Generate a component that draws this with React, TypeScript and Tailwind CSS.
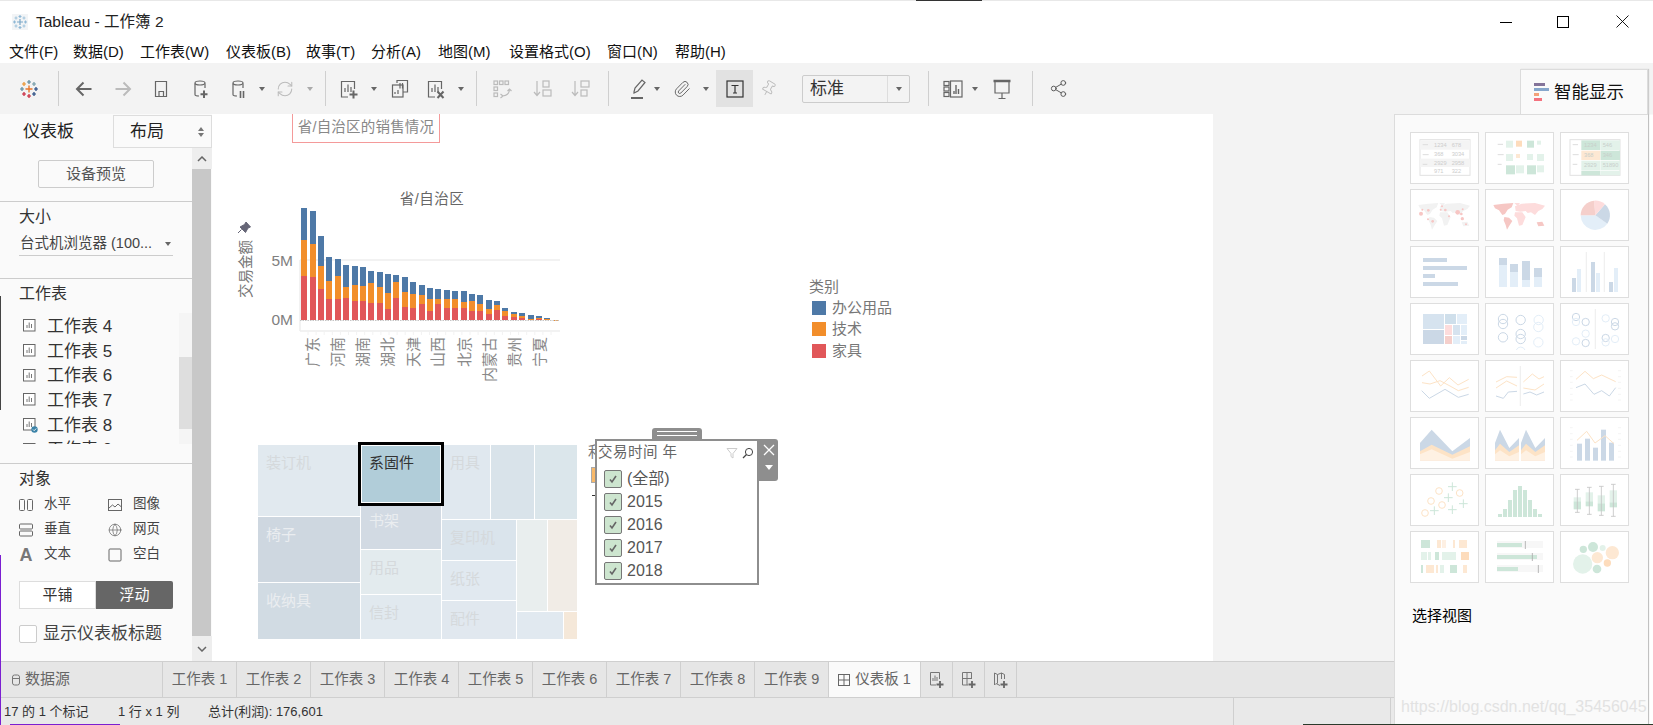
import React from "react";
import { Paperclip, Pin, Share2, RefreshCw, Globe } from "lucide-react";

const Caret = ({ c = "#666" }: { c?: string }) => (
  <svg width="8" height="6" viewBox="0 0 8 6" className="block shrink-0"><path d="M1 1h6L4 5z" fill={c} /></svg>
);
const Sep = ({ cls }: { cls: string }) => <div className={`w-px h-[35px] bg-[#cfcfcf] shrink-0 ${cls}`} />;
const Ico = ({ children, cls }: { children: React.ReactNode; cls: string }) => (
  <svg width="20" height="22" viewBox="0 0 20 22" fill="none" stroke="#666" strokeWidth="1.2" className={`block shrink-0 ${cls}`}>{children}</svg>
);

const Plus = ({ x, y, s = 3, c, w = 1.2 }: { x: number; y: number; s?: number; c: string; w?: number }) => (
  <path d={`M${x - s} ${y}h${s * 2}M${x} ${y - s}v${s * 2}`} stroke={c} strokeWidth={w} fill="none" />
);

const Logo = () => (
  <svg width="20" height="22" viewBox="0 0 20 22" className="block shrink-0 ml-[19px]">
    <Plus x={10} y={11} s={3.5} c="#e8762b" w={1.4} />
    <Plus x={10} y={4} s={2} c="#5b879b" />
    <Plus x={10} y={18} s={2} c="#c72035" />
    <Plus x={3} y={11} s={2} c="#59879b" />
    <Plus x={17} y={11} s={2} c="#1f447e" />
    <Plus x={5} y={6} s={2} c="#eb912b" />
    <Plus x={15} y={6} s={2} c="#7099a6" />
    <Plus x={5} y={16} s={2} c="#c72037" />
    <Plus x={15} y={16} s={2} c="#1f457e" />
  </svg>
);

const SheetIcon = ({ badge }: { badge?: boolean }) => (
  <svg width="16" height="16" viewBox="0 0 16 16" fill="none" className="block shrink-0">
    <rect x="1.5" y="1.5" width="11.5" height="11.5" stroke="#666" strokeWidth="1" fill="#fff" />
    <path d="M5 10V7M7.2 10V4.5M9.5 10V6" stroke="#777" strokeWidth="1" />
    {badge && <circle cx="12.5" cy="12.5" r="3.2" fill="#3b83a8" />}
    {badge && <path d="M11 12.5l1.2 1.2 2-2.2" stroke="#fff" strokeWidth="0.9" />}
  </svg>
);

const Thumb = ({ children }: { children?: React.ReactNode }) => (
  <div className="w-[69px] h-[52px] bg-white outline outline-1 -outline-offset-1 outline-[#dedede]">
    <svg viewBox="0 0 207 156" width="69" height="52" className="block">{children}</svg>
  </div>
);

const G1 = "#cde6d9", G2 = "#e3f2ea", O1 = "#fddcbc", O2 = "#fde8d3", B1 = "#cbd8e6", B2 = "#e3eef8", R1 = "#f5cfcb", R2 = "#fddcdc";

const World = ({ a, b }: { a: string; b: string }) => (
  <g>
    <polygon fill={a} points="25,48 55,44 85,42 80,55 68,62 60,75 52,78 42,64 30,58" />
    <polygon fill={b} points="88,42 105,42 98,52" />
    <polygon fill={a} points="58,84 72,86 82,96 72,112 66,122 62,108 56,94" />
    <polygon fill={b} points="90,52 110,44 150,42 180,50 172,60 160,66 150,78 138,70 128,72 122,66 106,68 92,66" />
    <polygon fill={b} points="90,70 112,70 122,84 112,108 102,110 96,88 88,80" />
    <polygon fill={a} points="155,100 172,98 178,110 160,112" />
  </g>
);

const ThumbLine = ({ p, c }: { p: string; c: string }) => <polyline points={p} fill="none" stroke={c} strokeWidth="3" />;

const Ticks = () => (
  <g stroke="#eee" strokeWidth="2">
    {[32, 50, 67, 85, 103, 120].map((y) => (
      <path key={y} d={`M30 ${y}h8M174 ${y}h9`} />
    ))}
  </g>
);

const Thumbs = () => (
  <div className="grid grid-cols-[repeat(3,69px)] gap-x-[6px] gap-y-[5px] ml-[15px] mt-[17px]">
    <Thumb>
      <rect x="30" y="23" width="150" height="107" fill="#fff" stroke="#e2e2e2" strokeWidth="3" />
      <rect x="30" y="25" width="150" height="28" fill="#f4f4f4" /><rect x="30" y="80" width="150" height="25" fill="#f4f4f4" />
      <path d="M38 38h16M38 68h18M38 97h14" stroke="#ddd" strokeWidth="3" />
      <g fontSize="17" fill="#ccc"><text x="72" y="45">1234</text><text x="125" y="45">678</text><text x="72" y="72">368</text><text x="125" y="72">3034</text><text x="72" y="98">2929</text><text x="125" y="98">2958</text><text x="72" y="124">971</text><text x="125" y="124">322</text></g>
    </Thumb>
    <Thumb>
      <path d="M38 37h16M38 68h18M38 97h12" stroke="#ddd" strokeWidth="3" />
      <rect x="63" y="26" width="21" height="21" fill={G2} /><rect x="93" y="26" width="18" height="18" fill={O1} /><rect x="126" y="26" width="21" height="21" fill={G1} /><rect x="156" y="26" width="12" height="12" fill={G2} />
      <rect x="63" y="66" width="21" height="21" fill={G2} /><rect x="93" y="66" width="12" height="12" fill={O2} /><rect x="126" y="66" width="18" height="18" fill={G2} /><rect x="156" y="66" width="21" height="21" fill={G2} />
      <rect x="63" y="100" width="27" height="27" fill={G1} /><rect x="93" y="100" width="24" height="24" fill={G2} /><rect x="126" y="100" width="27" height="27" fill={G1} /><rect x="156" y="100" width="21" height="21" fill={G2} />
    </Thumb>
    <Thumb>
      <rect x="30" y="23" width="150" height="107" fill="#fff" stroke="#e2e2e2" strokeWidth="3" />
      <path d="M38 38h16M38 68h18M38 97h14" stroke="#ddd" strokeWidth="3" />
      <rect x="64" y="25" width="57" height="29" fill={G1} /><rect x="122" y="25" width="58" height="29" fill={G2} />
      <rect x="64" y="56" width="57" height="28" fill={O2} /><rect x="122" y="56" width="58" height="28" fill={G1} />
      <rect x="64" y="86" width="57" height="28" fill={G2} /><rect x="122" y="86" width="58" height="28" fill={G2} />
      <rect x="64" y="116" width="57" height="14" fill={G1} /><rect x="122" y="116" width="58" height="14" fill={G2} />
      <g fontSize="17" fill="#c8cfca"><text x="72" y="45">1234</text><text x="128" y="45">546</text><text x="72" y="75">368</text><text x="128" y="75">346</text><text x="72" y="105">2929</text><text x="128" y="105">51890</text></g>
    </Thumb>

    <Thumb>
      <World a="#f2f2f2" b="#f2f2f2" />
      <g fill="#f7c6c4">
        <circle cx="33" cy="74" r="6" /><circle cx="37" cy="62" r="3" /><circle cx="55" cy="64" r="4" /><circle cx="92" cy="62" r="3" /><circle cx="96" cy="52" r="3" /><circle cx="106" cy="63" r="4" /><circle cx="143" cy="70" r="7" /><circle cx="157" cy="89" r="5" /><circle cx="154" cy="75" r="4" /><circle cx="54" cy="91" r="3" /><circle cx="68" cy="97" r="4" /><circle cx="117" cy="82" r="3" /><circle cx="168" cy="106" r="3" /><circle cx="158" cy="61" r="3" />
      </g>
    </Thumb>
    <Thumb><World a="#f6c7c4" b={R2} /></Thumb>
    <Thumb>
      <path d="M106 79L62 79A44 44 0 0 0 142 104Z" fill={B2} />
      <path d="M106 79L142 104A44 44 0 0 0 135 46Z" fill={B1} />
      <path d="M106 79L135 46A44 44 0 0 0 102 35Z" fill={R2} />
      <path d="M106 79L102 35A44 44 0 0 0 62 79Z" fill={R1} />
    </Thumb>

    <Thumb>
      <g fill={B1}><rect x="39" y="36" width="72" height="12" /><rect x="39" y="60" width="132" height="12" /><rect x="39" y="84" width="36" height="12" /><rect x="39" y="108" width="105" height="12" /></g>
    </Thumb>
    <Thumb>
      <g fill={B2}><rect x="42" y="57" width="24" height="66" /><rect x="75" y="78" width="24" height="45" /><rect x="111" y="102" width="24" height="21" /><rect x="147" y="93" width="24" height="30" /></g>
      <g fill={B1}><rect x="42" y="36" width="24" height="21" /><rect x="75" y="54" width="24" height="24" /><rect x="111" y="45" width="24" height="57" /><rect x="147" y="66" width="24" height="27" /></g>
    </Thumb>
    <Thumb>
      <path d="M79 18v120M133 18v120" stroke="#e4e4e4" strokeWidth="2" />
      <g fill={B1}><rect x="36" y="96" width="12" height="42" /><rect x="93" y="48" width="12" height="90" /><rect x="147" y="108" width="12" height="30" /></g>
      <g fill={B2}><rect x="51" y="69" width="12" height="69" /><rect x="108" y="81" width="12" height="57" /><rect x="162" y="66" width="12" height="72" /></g>
    </Thumb>

    <Thumb>
      <rect x="39" y="33" width="63" height="45" fill="#d6e3ef" /><rect x="39" y="81" width="63" height="42" fill={B1} /><rect x="105" y="33" width="33" height="30" fill="#cfdfeb" /><rect x="141" y="33" width="30" height="30" fill={B2} />
      <rect x="105" y="66" width="21" height="30" fill={R2} /><rect x="105" y="99" width="21" height="24" fill={R1} /><rect x="129" y="66" width="21" height="30" fill="#d6e3ef" /><rect x="153" y="66" width="18" height="30" fill={B2} />
      <rect x="129" y="99" width="21" height="24" fill={B2} /><rect x="153" y="99" width="18" height="12" fill={B1} /><rect x="153" y="114" width="18" height="9" fill={B2} />
    </Thumb>
    <Thumb>
      <g fill="none" strokeWidth="3" stroke={B1}><circle cx="54" cy="48" r="14" /><circle cx="54" cy="63" r="14" /><circle cx="107" cy="51" r="14" /><circle cx="54" cy="103" r="14" /><circle cx="107" cy="93" r="14" /><circle cx="107" cy="108" r="14" /></g>
      <g fill="none" strokeWidth="3" stroke={B2}><circle cx="161" cy="51" r="14" /><circle cx="160" cy="72" r="14" /><circle cx="160" cy="118" r="14" /><path d="M94 141a14 14 0 0 1 26 0" /></g>
    </Thumb>
    <Thumb>
      <path d="M106 18v120" stroke="#e4e4e4" strokeWidth="2" />
      <g fill="none" strokeWidth="3" stroke={B1}><circle cx="48" cy="42" r="11" /><circle cx="77" cy="57" r="11" /><circle cx="77" cy="120" r="11" /><circle cx="165" cy="57" r="11" /><circle cx="165" cy="70" r="11" /><circle cx="137" cy="105" r="11" /></g>
      <g fill="none" strokeWidth="3" stroke={B2}><circle cx="48" cy="57" r="11" /><circle cx="77" cy="92" r="11" /><circle cx="48" cy="115" r="11" /><circle cx="137" cy="46" r="11" /><circle cx="137" cy="118" r="11" /><circle cx="165" cy="108" r="11" /></g>
    </Thumb>

    <Thumb>
      <ThumbLine c="#fde3c6" p="36,48 58,33 92,78 118,53 144,75 176,58" />
      <ThumbLine c="#fde3c6" p="36,68 60,72 90,62 120,78 145,92 176,82" />
      <ThumbLine c={B1} p="35,92 58,115 105,88 145,112 176,103" />
    </Thumb>
    <Thumb>
      <path d="M106 18v120" stroke="#e4e4e4" strokeWidth="2" />
      <ThumbLine c="#fde3c6" p="33,66 65,50 96,52" /><ThumbLine c="#fde3c6" p="33,84 65,63 96,78" /><ThumbLine c={B1} p="33,108 55,115 70,96 96,94" />
      <ThumbLine c="#fde3c6" p="115,66 142,42 162,57 177,50" /><ThumbLine c="#fde3c6" p="115,84 150,90 177,72" /><ThumbLine c={B1} p="115,102 135,96 155,105 177,96" />
    </Thumb>
    <Thumb>
      <Ticks />
      <ThumbLine c="#fde3c6" p="48,58 75,34 100,56 125,45 167,65" /><ThumbLine c={B1} p="48,83 75,72 102,103 125,92 148,108 167,83" />
    </Thumb>

    <Thumb>
      <polygon fill={B1} points="30,78 65,38 127,103 180,63 180,131 30,131" />
      <polygon fill="#fde3c6" points="30,103 65,83 127,113 180,88 180,131 30,131" />
      <polygon fill="#fef1e3" points="30,112 65,97 127,125 180,105 180,131 30,131" />
    </Thumb>
    <Thumb>
      <polygon fill={B1} points="30,78 45,38 73,93 102,63 102,131 30,131" />
      <polygon fill="#fde3c6" points="30,100 45,80 73,105 102,85 102,131 30,131" />
      <polygon fill="#fef1e3" points="30,112 45,100 73,118 102,105 102,131 30,131" />
      <polygon fill={B1} points="108,78 123,38 151,93 180,63 180,131 108,131" />
      <polygon fill="#fde3c6" points="108,100 123,80 151,105 180,85 180,131 108,131" />
      <polygon fill="#fef1e3" points="108,112 123,100 151,118 180,105 180,131 108,131" />
    </Thumb>
    <Thumb>
      <Ticks />
      <g fill={B1}><rect x="51" y="80" width="15" height="51" /><rect x="75" y="65" width="15" height="66" /><rect x="99" y="92" width="15" height="39" /><rect x="123" y="38" width="15" height="93" /><rect x="147" y="77" width="15" height="54" /></g>
      <ThumbLine c="#fde3c6" p="51,70 80,43 105,78 135,56 162,80" />
    </Thumb>

    <Thumb>
      <g fill="none" stroke="#fde3c6" strokeWidth="3"><circle cx="87" cy="51" r="10" /><circle cx="149" cy="57" r="10" /><circle cx="63" cy="81" r="10" /><circle cx="96" cy="93" r="10" /><circle cx="45" cy="117" r="10" /></g>
      <g fill="none" stroke={G1} strokeWidth="3"><path d="M114 38h26M127 25v26M102 71h26M115 58v26M147 89h26M160 76v26M114 107h26M127 94v26M60 110h26M73 97v26" /></g>
    </Thumb>
    <Thumb>
      <g fill={G1}>{[120, 105, 78, 48, 36, 48, 78, 105, 120].map((t, i) => <rect key={i} x={39 + i * 15} y={t} width="12" height={129 - t} />)}</g>
    </Thumb>
    <Thumb>
      {[[52, 46, 115, 70, 82, 106], [88, 40, 121, 55, 82, 97], [124, 37, 124, 64, 88, 112], [160, 31, 127, 49, 85, 100]].map(([x, a, b, t, s, e], i) => (
        <g key={i}>
          <rect x={x - 11} y={t} width="22" height={s - t} fill={G2} /><rect x={x - 11} y={s} width="22" height={e - s} fill={G1} />
          <path d={`M${x} ${a}V${b}M${x - 7} ${a}h14M${x - 7} ${b}h14`} stroke="#c4c4c4" strokeWidth="2.5" fill="none" />
        </g>
      ))}
    </Thumb>

    <Thumb>
      <rect x="33" y="27" width="27" height="24" fill={G1} /><rect x="81" y="27" width="12" height="24" fill={O2} /><rect x="96" y="27" width="12" height="24" fill="#fef0e3" /><rect x="129" y="27" width="6" height="24" fill={O2} /><rect x="147" y="27" width="24" height="24" fill={O2} />
      <rect x="33" y="63" width="18" height="24" fill={G2} /><rect x="54" y="63" width="9" height="24" fill={G2} /><rect x="75" y="63" width="12" height="24" fill={G1} /><rect x="96" y="63" width="42" height="24" fill={G2} /><rect x="153" y="63" width="24" height="24" fill={O1} />
      <rect x="33" y="102" width="6" height="24" fill={G1} /><rect x="48" y="102" width="24" height="24" fill={O2} /><rect x="78" y="102" width="6" height="24" fill={O2} /><rect x="90" y="102" width="12" height="24" fill={G2} /><rect x="120" y="102" width="21" height="24" fill={G1} /><rect x="159" y="102" width="12" height="24" fill={O2} />
    </Thumb>
    <Thumb>
      <g fill="#f7f7f7"><rect x="36" y="30" width="138" height="21" /><rect x="36" y="66" width="138" height="21" /><rect x="36" y="102" width="138" height="21" /></g>
      <g fill={G1}><rect x="36" y="36" width="75" height="12" /><rect x="36" y="72" width="120" height="12" /><rect x="36" y="108" width="63" height="12" /></g>
      <path d="M121 30v24M142 66v24M160 102v24" stroke="#aaa" strokeWidth="2.5" />
    </Thumb>
    <Thumb>
      <circle cx="68" cy="99" r="29" fill={G2} /><circle cx="112" cy="80" r="17" fill={O2} /><circle cx="157" cy="65" r="20" fill={O2} /><circle cx="142" cy="96" r="11" fill={O1} /><circle cx="111" cy="114" r="13" fill={G1} /><circle cx="99" cy="48" r="15" fill={G1} /><circle cx="70" cy="55" r="11" fill={G1} /><circle cx="128" cy="51" r="9" fill={G2} />
    </Thumb>
  </div>
);

const BARS: number[][] = [
  [243, 294, 390, 498], [270, 303, 402, 501], [294, 378, 468, 537], [318, 441, 513, 567], [345, 447, 498, 567], [369, 465, 531, 564],
  [396, 468, 525, 573], [420, 471, 528, 573], [444, 483, 519, 579], [471, 486, 531, 579], [495, 492, 549, 597], [519, 495, 516, 564],
  [546, 501, 546, 591], [570, 516, 552, 594], [597, 525, 555, 582], [621, 534, 567, 603], [645, 537, 567, 582], [672, 540, 567, 594],
  [696, 543, 567, 594], [723, 543, 576, 594], [747, 552, 573, 603], [771, 555, 582, 603], [798, 570, 597, 612], [822, 573, 585, 600],
  [846, 594, 603, 618], [873, 606, 612, 621], [897, 609, 618, 624], [924, 615, 627, 630], [948, 618, 624, 627], [972, 624, 627, 630], [999, 630, 630, 633],
];
const LABELS: [number, string][] = [[318, "广东"], [343, "河南"], [368, "湖南"], [393, "湖北"], [419, "天津"], [443, "山西"], [470, "北京"], [495, "内蒙古"], [520, "贵州"], [545, "宁夏"]];

const BarChart = () => (
  <svg viewBox="233 180 330 220" className="absolute left-[21px] top-[66px] w-[330px] h-[220px]">
    <text x="432" y="204" textAnchor="middle" fontSize="14.5" fill="#666" letterSpacing="0.5">省/自治区</text>
    <path d="M246 222l4.500 5-2.500 1-2.500 4.500-5.500-5.500 4.500-2.500zM241.500 229.500l-3.500 3.500" fill="#667" stroke="#667" strokeWidth="1" />
    <text transform="translate(251 298) rotate(-90)" fontSize="14.5" fill="#777">交易金额</text>
    <path d="M300 260h260M300 331h260M300 260v71" stroke="#eeeeee" strokeWidth="1.5" fill="none" />
    {BARS.map(([x, a, b, c], i) => {
      const X = 220 + x / 3;
      const ya = 110 + a / 3, yb = 110 + b / 3, yc = 110 + c / 3, y0 = 320;
      return (
        <g key={i}>
          <rect x={X} y={ya} width="6" height={Math.max(yb - ya, 0)} fill="#4e79a7" />
          <rect x={X} y={yb} width="6" height={Math.max(yc - yb, 0)} fill="#f28e2b" />
          <rect x={X} y={yc} width="6" height={Math.max(y0 - yc, 0)} fill="#e15759" />
        </g>
      );
    })}
    <path d="M300 320.5h260" stroke="#c4c4c4" strokeWidth="1" strokeDasharray="1.5 1" />
    <g stroke="#f2f2f2">{Array.from({ length: 31 }).map((_, i) => <path key={i} d={`M${308 + i * 8.1} 331v4`} />)}</g>
    <g fontSize="15.5" fill="#808080" textAnchor="end"><text x="293" y="266">5M</text><text x="293" y="325">0M</text></g>
    <g fontSize="15" fill="#888">
      {LABELS.map(([x, t]) => <text key={t} transform={`translate(${x} 337) rotate(-90)`} textAnchor="end">{t}</text>)}
    </g>
  </svg>
);

const Cell = ({ cls, t, dark }: { cls: string; t?: string; dark?: boolean }) => (
  <div className={`pl-[8px] pt-[8px] text-[15px] leading-[20px] ${dark ? "text-[#eaedf0]" : "text-[#d5d9dc]"} ${cls}`}>{t}</div>
);

const TreeMap = () => (
  <div className="absolute left-[46px] top-[331px] w-[319px] h-[194px] flex gap-px bg-white">
    <div className="w-[102px] flex flex-col gap-px">
      <Cell cls="h-[71px] bg-[#e1e9ef]" t="装订机" />
      <Cell cls="h-[65px] bg-[#ced7e0]" t="椅子" dark />
      <Cell cls="h-[56px] bg-[#d1dbe3]" t="收纳具" dark />
    </div>
    <div className="w-[80px] flex flex-col gap-px">
      <div className="h-[58px] bg-[#b1cdd9] border border-white ring-[3px] ring-black relative z-10 pl-[7px] pt-[7px] text-[15px] leading-[20px] text-[#333]">系固件</div>
      <Cell cls="h-[45px] bg-[#d2dae3] !pt-[7px]" t="书架" dark />
      <Cell cls="h-[44px] bg-[#e3ebee]" t="用品" />
      <Cell cls="h-[44px] bg-[#e1e9ef]" t="信封" />
    </div>
    <div className="w-[135px] flex flex-col gap-px">
      <div className="h-[74px] flex gap-px">
        <Cell cls="w-[48px] bg-[#e0e8ef]" t="用具" />
        <div className="w-[43px] bg-[#d9e3ea]" />
        <div className="w-[42px] bg-[#dbe6eb]" />
      </div>
      <div className="h-[119px] flex gap-px">
        <div className="w-[74px] flex flex-col gap-px">
          <Cell cls="h-[40px] bg-[#dae4ec]" t="复印机" />
          <Cell cls="h-[39px] bg-[#e1e9f0]" t="纸张" />
          <Cell cls="h-[38px] bg-[#e1e8ef]" t="配件" />
        </div>
        <div className="w-[60px] flex flex-col gap-px">
          <div className="h-[91px] flex gap-px">
            <div className="w-[30px] bg-[#e9eeee]" />
            <div className="w-[29px] bg-[#f1ece6]" />
          </div>
          <div className="h-[27px] flex gap-px">
            <div className="w-[46px] bg-[#e1e9f0]" />
            <div className="w-[13px] bg-[#f5e8d9]" />
          </div>
        </div>
      </div>
    </div>
  </div>
);

const FilterRow = ({ t }: { t: string }) => (
  <div className="h-[23px] flex items-center pl-[7px]">
    <div className="w-[18px] h-[18px] rounded-[2px] bg-[#cde5cf] border border-[#777] flex items-center justify-center">
      <svg width="12" height="12" viewBox="0 0 12 12" fill="none"><path d="M3 6.500l2 2.500 4-6" stroke="#666" strokeWidth="1.6" /></svg>
    </div>
    <span className="ml-[5px] text-[16px] text-[#555]">{t}</span>
  </div>
);

const Filter = () => (
  <>
    <div className="absolute left-[376px] top-[329px] text-[14.5px] leading-[18px] text-[#777]">利</div>
    <div className="absolute left-[379px] top-[353px] w-[8px] h-[16px] bg-[#f9b969] border border-[#aaa]" />
    <div className="absolute left-[380px] top-[381px] w-[4px] h-px bg-[#333]" />
    <div className="absolute left-[383px] top-[325px] w-[164px] h-[146px] border-2 border-[#8e8e8e] bg-white">
      <div className="absolute left-[55px] -top-[13px] w-[50px] h-[11px] bg-[#8e8e8e] rounded-t-[3px] flex flex-col items-center justify-center gap-[3px]">
        <div className="w-[40px] h-px bg-white" />
        <div className="w-[40px] h-px bg-white" />
      </div>
      <div className="absolute left-[162px] -top-[2px] w-[19px] h-[42px] bg-[#8e8e8e] rounded-r-[3px] flex flex-col items-center pt-[5px]">
        <svg width="12" height="12" viewBox="0 0 12 12"><path d="M1 1l10 10M11 1L1 11" stroke="#fff" strokeWidth="1.3" /></svg>
        <svg width="8" height="5" viewBox="0 0 8 5" className="mt-[9px]"><path d="M0 0h8L4 5z" fill="#fff" /></svg>
      </div>
      <div className="h-[24px] flex items-center pl-[1px] pr-[3px] text-[14.5px] tracking-[0.5px] text-[#666]">
        <span>交易时间 年</span>
        <svg width="12" height="12" viewBox="0 0 12 12" fill="none" className="ml-auto"><path d="M1 1.500h10L7 6.500V11L5 9.500v-3z" stroke="#ccc" /></svg>
        <svg width="12" height="12" viewBox="0 0 12 12" fill="none" className="ml-[4px]"><circle cx="7" cy="5" r="3.600" stroke="#444" /><path d="M4.500 7.500L1 11" stroke="#444" strokeWidth="1.2" /></svg>
      </div>
      <div className="mt-[2px]">
        {["(全部)", "2015", "2016", "2017", "2018"].map((t) => <FilterRow key={t} t={t} />)}
      </div>
    </div>
  </>
);

const ObjRow = ({ icon, t }: { icon: React.ReactNode; t: string }) => (
  <div className="h-[25px] flex items-center">
    <div className="w-[14px] h-[16px] flex items-center justify-center shrink-0">{icon}</div>
    <span className="ml-[11px] text-[13.5px] text-[#444]">{t}</span>
  </div>
);

const SheetRow = ({ n, badge }: { n: number; badge?: boolean }) => (
  <div className="h-[24.7px] shrink-0 flex items-center pl-[22px]">
    <SheetIcon badge={badge} />
    <span className="ml-[9px] text-[17px] leading-none text-[#333]">工作表 {n}</span>
  </div>
);

const LeftPanel = () => (
  <div className="w-[212px] shrink-0 bg-[#fafafa] flex flex-col">
    <div className="h-[33px] flex shrink-0 mt-px">
      <div className="w-[114px] flex items-center pl-[23px] text-[17px] text-[#222] border-r border-[#ddd]">仪表板</div>
      <div className="flex-1 flex items-center pl-[16px] text-[17px] text-[#222] border-b border-r border-t border-[#ddd]">
        <span>布局</span>
        <svg width="8" height="12" viewBox="0 0 8 12" className="ml-auto mr-[6px]"><path d="M1 5l3-4 3 4zM1 7l3 4 3-4z" fill="#777" /></svg>
      </div>
    </div>
    <div className="flex-1 flex min-h-0">
      <div className="w-[192px] flex flex-col shrink-0">
        <div className="h-[54px] border-b border-[#ccc] pt-[12px] pl-[38px] shrink-0">
          <div className="w-[116px] h-[28px] border border-[#ccc] rounded-[2px] flex items-center justify-center text-[15px] text-[#555]">设备预览</div>
        </div>
        <div className="h-[77px] border-b border-[#ccc] pl-[19px] pt-[5px] shrink-0">
          <div className="h-[20px] leading-[20px] text-[16px] text-[#333]">大小</div>
          <div className="mt-[5px] w-[154px] h-[24px] border-b border-[#ccc] flex items-center pl-px text-[14.5px] text-[#444]">
            <span>台式机浏览器 (100...</span>
            <span className="ml-auto mr-[1px]"><Caret /></span>
          </div>
        </div>
        <div className="h-[185px] border-b border-[#ccc] pt-[5px] shrink-0 flex flex-col">
          <div className="h-[20px] leading-[20px] pl-[19px] text-[16px] text-[#333] shrink-0">工作表</div>
          <div className="mt-[9px] h-[131px] flex shrink-0">
            <div className="flex-1 overflow-hidden pt-[1px] flex flex-col">
              <SheetRow n={4} /><SheetRow n={5} /><SheetRow n={6} /><SheetRow n={7} /><SheetRow n={8} badge /><SheetRow n={9} />
            </div>
            <div className="w-[13px] bg-[#f5f5f5] pt-[44px]"><div className="h-[72px] bg-[#dedede]" /></div>
          </div>
        </div>
        <div className="flex-1 pl-[19px] pt-[5px]">
          <div className="h-[20px] leading-[20px] text-[16px] text-[#333]">对象</div>
          <div className="mt-[3px] w-[172px] grid grid-cols-[89px_1fr]">
            <ObjRow t="水平" icon={<svg width="14" height="14" viewBox="0 0 14 14" fill="none" stroke="#666"><rect x="0.5" y="1.5" width="5" height="11" rx="1" /><rect x="8.5" y="1.5" width="5" height="11" rx="1" /></svg>} />
            <ObjRow t="图像" icon={<svg width="14" height="14" viewBox="0 0 14 14" fill="none" stroke="#666"><rect x="0.5" y="1.5" width="13" height="11" /><path d="M1 10l3.5-3 2.5 2 3-3 3.5 3" /></svg>} />
            <ObjRow t="垂直" icon={<svg width="14" height="14" viewBox="0 0 14 14" fill="none" stroke="#666"><rect x="0.5" y="1" width="13" height="5" rx="1" /><rect x="0.5" y="8" width="13" height="5" rx="1" /></svg>} />
            <ObjRow t="网页" icon={<Globe size={14} color="#666" strokeWidth={1.2} />} />
            <ObjRow t="文本" icon={<span className="text-[18px] font-bold leading-none text-[#777]">A</span>} />
            <ObjRow t="空白" icon={<svg width="14" height="14" viewBox="0 0 14 14" fill="none" stroke="#666"><rect x="1" y="1" width="12" height="12" rx="1" /></svg>} />
          </div>
          <div className="mt-[14px] flex w-[154px] h-[28px]">
            <div className="w-[77px] bg-white border border-[#ddd] flex items-center justify-center text-[15px] text-[#333]">平铺</div>
            <div className="w-[77px] bg-[#666] rounded-r-[2px] flex items-center justify-center text-[15px] text-white">浮动</div>
          </div>
          <div className="mt-[16px] flex items-center h-[18px]">
            <div className="w-[18px] h-[18px] bg-white border border-[#ccc] rounded-[2px]" />
            <span className="ml-[6px] text-[17px] text-[#444]">显示仪表板标题</span>
          </div>
        </div>
      </div>
      <div className="w-[20px] flex flex-col">
        <div className="h-[21px] bg-[#eeeeee] flex items-center justify-center">
          <svg width="10" height="6" viewBox="0 0 10 6" fill="none"><path d="M1 5l4-4 4 4" stroke="#666" strokeWidth="1.5" /></svg>
        </div>
        <div className="flex-1 bg-[#c8c8c8] mr-px" />
        <div className="h-[25px] bg-[#eeeeee] flex items-center justify-center">
          <svg width="10" height="6" viewBox="0 0 10 6" fill="none"><path d="M1 1l4 4 4-4" stroke="#666" strokeWidth="1.5" /></svg>
        </div>
      </div>
    </div>
  </div>
);

const Tab = ({ t }: { t: string }) => (
  <div className="w-[74px] shrink-0 border-r border-[#cfcfcf] flex items-center justify-center text-[14.5px] text-[#666]">{t}</div>
);
const AddTab = ({ children }: { children: React.ReactNode }) => (
  <div className="w-[32px] shrink-0 border-r border-[#cfcfcf] flex items-center justify-center">
    <svg width="16" height="18" viewBox="0 0 16 18" fill="none">
      {children}
      <path d="M11 10v7M7.5 13.5h7" stroke="#666" strokeWidth="1.8" />
    </svg>
  </div>
);

const Toolbar = () => (
  <div className="h-[51px] bg-[#f3f3f3] flex items-center shrink-0 relative">
    <Logo />
    <Sep cls="ml-[19px]" />
    <Ico cls="ml-[15px]"><path d="M17.5 11H3M9.5 4.5L3 11l6.5 6.5" strokeWidth="2" /></Ico>
    <Ico cls="ml-[19px]"><path d="M2.5 11H17M10.5 4.5L17 11l-6.5 6.5" stroke="#bbb" strokeWidth="2" /></Ico>
    <Ico cls="ml-[18px]"><path d="M4.5 3.5h11v15h-11zM8 18.5v-5h4.5v5" /></Ico>
    <Ico cls="ml-[19px]"><path d="M5 5.5v11c0 .8 1.5 1.5 4 1.5M15 5.5V10" /><ellipse cx="10" cy="5" rx="5" ry="2" /><path d="M14 12.5v7.5M10.5 16.3h7" strokeWidth="2" /></Ico>
    <Ico cls="ml-[18px]"><path d="M5 5.5v11c0 .8 1.5 1.5 4 1.5M15 5.5V10" /><ellipse cx="10" cy="5" rx="5" ry="2" /><path d="M12.5 13v7M15.5 13v7" strokeWidth="1.6" /></Ico>
    <div className="ml-[10px]"><Caret /></div>
    <div className="ml-[9px] w-[20px] flex justify-center"><RefreshCw size={18} color="#bbb" strokeWidth={1.4} /></div>
    <div className="ml-[11px]"><Caret c="#aaa" /></div>
    <Sep cls="ml-[11px]" />
    <Ico cls="ml-[13px]"><path d="M9 19H2.5V3.5h13V11" /><path d="M6 14v-4M9 14V6.5M12 14V9" /><path d="M14.5 12.5v8M10.5 16.5h8" strokeWidth="2" /></Ico>
    <div className="ml-[11px]"><Caret /></div>
    <Ico cls="ml-[12px]"><path d="M7 5V2.5h10.5V14H13" /><rect x="2.5" y="7" width="10.5" height="12" /><path d="M10 10.5V5M12.5 10.5V5" /><path d="M5 16v-2M8 16v-4" /></Ico>
    <Ico cls="ml-[16px]"><path d="M9 19H2.5V3.5h13V11" /><path d="M6 14v-4M9 14V6.5M12 14V9" /><path d="M11.5 13.5l6 6.5M17.5 13.5l-6 6.5" strokeWidth="2" /></Ico>
    <div className="ml-[11px]"><Caret /></div>
    <Sep cls="ml-[11px]" />
    <Ico cls="ml-[15px]"><g stroke="#bbb"><rect x="2" y="3" width="3.5" height="3.5" /><rect x="7.5" y="3" width="3.5" height="3.5" /><rect x="13" y="3" width="3.5" height="3.5" /><rect x="2" y="9" width="3.5" height="3.5" /><rect x="2" y="15" width="3.5" height="3.5" /><path d="M17.5 11c0 4-2.500 6.500-7 7M8.500 16l2.500 2-2.500 2M15.500 13l2-2 2 2" /></g></Ico>
    <Ico cls="ml-[20px]"><g stroke="#bbb"><path d="M5 3v14M2 14l3 3.500 3-3.500" /><rect x="11" y="3" width="6" height="6" /><rect x="11" y="12" width="8" height="6" /></g></Ico>
    <Ico cls="ml-[18px]"><g stroke="#bbb"><path d="M5 3v14M2 14l3 3.500 3-3.500" /><rect x="11" y="3" width="8" height="6" /><rect x="11" y="12" width="6" height="6" /></g></Ico>
    <Sep cls="ml-[18px]" />
    <Ico cls="ml-[19px]"><path d="M6 14l1-4 7-8 3 2.500-7 8.500-4 2z" /><path d="M3 20h12" strokeWidth="2" /></Ico>
    <div className="ml-[5px]"><Caret /></div>
    <div className="ml-[11px] w-[20px] flex justify-center"><Paperclip size={18} color="#666" strokeWidth={1.3} /></div>
    <div className="ml-[10px]"><Caret /></div>
    <div className="ml-[6px] w-[37px] h-[37px] bg-[#e2e2e2] flex items-center justify-center shrink-0">
      <svg width="18" height="18" viewBox="0 0 18 18" fill="none"><rect x="1" y="1" width="16" height="16" stroke="#333" strokeWidth="1.2" /><path d="M5.500 5.500h7M9 5.500v7.500M7 13h4" stroke="#333" strokeWidth="1.200" /></svg>
    </div>
    <div className="ml-[5px] w-[20px] flex justify-center"><Pin size={17} color="#bbb" strokeWidth={1.3} className="rotate-[30deg]" /></div>
    <div className="ml-[24px] w-[108px] h-[28px] border border-[#ccc] rounded-[2px] flex items-center text-[17px] text-[#333] bg-[#f3f3f3] shrink-0">
      <span className="pl-[7px] flex-1">标准</span>
      <div className="w-[22px] h-full border-l border-[#ddd] flex items-center justify-center"><Caret /></div>
    </div>
    <Sep cls="ml-[18px]" />
    <Ico cls="ml-[14px]"><rect x="1" y="3.500" width="5" height="4" /><rect x="1" y="9" width="5" height="4" /><rect x="1" y="14.500" width="5" height="4" /><rect x="7.500" y="3" width="11.500" height="16" /><path d="M11 16v-3M13 16V7M15.500 16v-5" strokeWidth="1.400" /></Ico>
    <div className="ml-[8px]"><Caret /></div>
    <Ico cls="ml-[13px]"><path d="M1.500 3h17" strokeWidth="2.500" /><path d="M3 3v12h14V3M10 15v5M6.500 20.500h7" /></Ico>
    <Sep cls="ml-[20px]" />
    <div className="ml-[15px] w-[20px] flex justify-center"><Share2 size={19} color="#555" strokeWidth={1.2} /></div>
    <div className="ml-auto mr-[5px] self-end w-[128px] h-[45px] bg-[#fafafa] border-t border-l border-r border-[#dcdcdc] flex items-center pl-[13px] shadow-[1px_0_1px_#ccc]">
      <div className="w-[16px] flex flex-col gap-[2px] -mt-[1px]">
        <div className="w-[11px] h-[3px] bg-[#84749a]" />
        <div className="w-[15px] h-[3px] bg-[#86a7cc]" />
        <div className="w-[5px] h-[3px] bg-[#f3a27a]" />
        <div className="w-[8px] h-[3px] bg-[#f4727f]" />
      </div>
      <span className="ml-[4px] text-[17.5px] text-[#111]">智能显示</span>
    </div>
  </div>
);

const MENU = [
  ["文件(F)", "w-[64px]"], ["数据(D)", "w-[67px]"], ["工作表(W)", "w-[86px]"], ["仪表板(B)", "w-[80px]"], ["故事(T)", "w-[65px]"],
  ["分析(A)", "w-[67px]"], ["地图(M)", "w-[71px]"], ["设置格式(O)", "w-[98px]"], ["窗口(N)", "w-[68px]"], ["帮助(H)", "w-[60px]"],
];

export default function App() {
  return (
    <div className="w-[1653px] h-[725px] overflow-hidden bg-white flex flex-col relative font-['Liberation_Sans','Noto_Sans_CJK_SC',sans-serif]">
      <div className="h-[42px] shrink-0 border-t border-[#e8e8e8] flex items-center bg-white">
        <svg width="16" height="16" viewBox="0 0 16 16" className="ml-[12px] bg-[#f2f4f6] shrink-0">
          <Plus x={8} y={8} s={3} c="#7aa7c7" /><Plus x={8} y={2.5} s={1.5} c="#8fb8d6" /><Plus x={8} y={13.500} s={1.5} c="#8fb8d6" /><Plus x={2.500} y={8} s={1.5} c="#8fb8d6" /><Plus x={13.500} y={8} s={1.5} c="#8fb8d6" /><Plus x={4} y={4} s={1.5} c="#a5c7de" /><Plus x={12} y={4} s={1.5} c="#a5c7de" /><Plus x={4} y={12} s={1.5} c="#a5c7de" /><Plus x={12} y={12} s={1.5} c="#a5c7de" />
        </svg>
        <span className="ml-[8px] text-[15.5px] text-[#222]">Tableau - 工作簿 2</span>
        <div className="ml-auto flex items-center mr-[24px]">
          <svg width="12" height="12" viewBox="0 0 12 12" fill="none" className="mr-[45px]"><path d="M0 6.500h12" stroke="#000" /></svg>
          <svg width="12" height="12" viewBox="0 0 12 12" fill="none" className="mr-[47px]"><rect x="0.500" y="0.500" width="11" height="11" stroke="#000" /></svg>
          <svg width="13" height="13" viewBox="0 0 13 13" fill="none"><path d="M0.500 0.500l12 12M12.500 0.500l-12 12" stroke="#000" strokeWidth="0.9" /></svg>
        </div>
      </div>
      <div className="h-[21px] shrink-0 flex items-center pl-[9px] text-[15px] text-[#111] bg-white">
        {MENU.map(([t, c]) => <span key={t} className={`shrink-0 whitespace-nowrap ${c}`}>{t}</span>)}
      </div>
      <Toolbar />
      <div className="flex flex-1 min-h-0">
        <div className="w-[1394px] shrink-0 flex flex-col">
          <div className="h-[547px] flex shrink-0">
            <LeftPanel />
            <div className="w-[1001px] shrink-0 bg-white relative overflow-hidden">
              <div className="absolute left-[80px] -top-px w-[148px] h-[30px] border border-t-0 border-[#f49a9a] flex items-center justify-center text-[14.5px] tracking-[0.2px] text-[#888] whitespace-nowrap">省/自治区的销售情况</div>
              <BarChart />
              <div className="absolute left-[597px] top-[163px] text-[15px] leading-[20px] text-[#777]">
                <div>类别</div>
                {[["#4e79a7", "办公用品"], ["#f28e2b", "技术"], ["#e15759", "家具"]].map(([c, t]) => (
                  <div key={t} className="h-[21.500px] flex items-center pl-[3px]">
                    <div className="w-[14px] h-[14px]" style={{ backgroundColor: c }} />
                    <span className="ml-[6px]">{t}</span>
                  </div>
                ))}
              </div>
              <TreeMap />
              <Filter />
            </div>
            <div className="flex-1 bg-[#f3f3f3]" />
          </div>
          <div className="h-[37px] shrink-0 bg-[#e6e6e6] border-y border-[#cfcfcf] flex">
            <div className="w-[163px] shrink-0 border-r border-[#cfcfcf] flex items-center pl-[12px] text-[15px] text-[#666]">
              <svg width="8" height="12" viewBox="0 0 8 12" fill="none" stroke="#777"><rect x="0.500" y="1" width="7" height="10" rx="2" /><path d="M1 4.500h6" /></svg>
              <span className="ml-[5px]">数据源</span>
            </div>
            {[1, 2, 3, 4, 5, 6, 7, 8, 9].map((n) => <Tab key={n} t={`工作表 ${n}`} />)}
            <div className="w-[92px] shrink-0 bg-[#fafafa] border-r border-[#cfcfcf] flex items-center justify-center text-[14.5px] text-[#666]">
              <svg width="12" height="12" viewBox="0 0 12 12" fill="none" stroke="#666"><rect x="0.500" y="0.500" width="11" height="11" /><path d="M6 0.500v11M0.500 6h11" /></svg>
              <span className="ml-[5px]">仪表板 1</span>
            </div>
            <AddTab><path d="M7 14H1.500V1.500h9V8" stroke="#777" /><path d="M4 10V7M6 10V4.500M8 10V6" stroke="#777" /></AddTab>
            <AddTab><path d="M7 14H1.500V1.500h9V8M6 1.500V14M1.500 7.500h9" stroke="#777" /></AddTab>
            <AddTab><path d="M7 14.500L3 12.500 1.500 14V2l3 1.500 4-1.500 3 1.500V8" stroke="#777" /><path d="M4.500 3.500v9M8.500 2v6" stroke="#777" /></AddTab>
          </div>
          <div className="h-[27px] shrink-0 bg-[#e9e9e9] flex items-center text-[13px] text-[#333]">
            <span className="ml-[4px] w-[114px] shrink-0">17 的 1 个标记</span>
            <span className="w-[90px] shrink-0">1 行 x 1 列</span>
            <span>总计(利润): 176,601</span>
            <div className="ml-auto mr-[156px] w-px h-full bg-[#cfcfcf]" />
            <div className="mr-[3px] w-px h-full bg-[#cfcfcf]" />
          </div>
        </div>
        <div className="w-[254px] h-[610px] shrink-0 bg-[#fafafa] border-t border-l border-[#dcdcdc] relative">
          <Thumbs />
          <div className="ml-[17px] mt-[23px] text-[15px] leading-[20px] text-black">选择视图</div>
          <div className="absolute left-[6px] top-[581px] text-[16px] leading-[22px] text-[#e2e2e2] whitespace-nowrap">https://blog.csdn.net/qq_35456045</div>
        </div>
        <div className="flex-1 bg-white shadow-[inset_1px_0_1px_#bbb]" />
      </div>
      {/* desktop showing behind the window edges */}
      <div className="absolute left-0 top-[296px] w-px h-[114px] bg-[#444]" />
      <div className="absolute left-0 top-[555px] w-px h-[170px] bg-[#7b1fd1]" />
      <div className="absolute left-[916px] top-0 w-[66px] h-px bg-[#333]" />
      <div className="absolute left-[1303px] bottom-0 w-[350px] h-px bg-[#2b3a2b]" />
      <div className="absolute left-[10px] bottom-0 w-[110px] h-px bg-[#7b1fd1]" />
    </div>
  );
}
